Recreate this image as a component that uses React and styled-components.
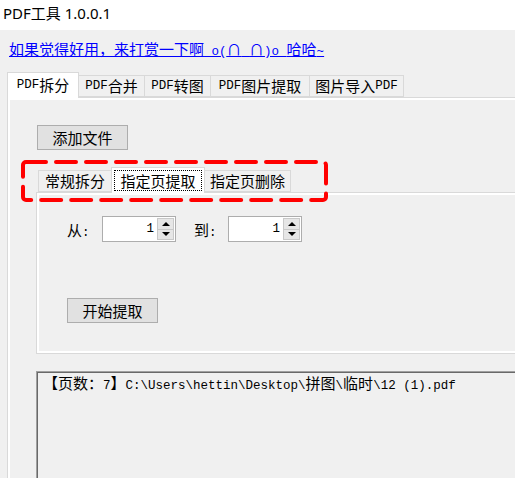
import React from "react";
import styled, { createGlobalStyle } from "styled-components";

const CJK = `"Noto Sans CJK SC", "Noto Sans", sans-serif`;

const Global = createGlobalStyle`
  html, body { margin: 0; padding: 0; background: #f0f0f0; overflow: hidden; }
  body { font-family: ${CJK}; color: #000; }
  * { box-sizing: border-box; }
`;

const Latin = styled.span`
  font-family: "Liberation Mono", monospace;
  font-size: 0.834em;
`;

function Sim({ children }) {
  const parts = String(children).split(/([\x20-\x7e]+)/);
  return parts.map((p, i) =>
    i % 2 === 1 ? <Latin key={i}>{p}</Latin> : p ? <React.Fragment key={i}>{p}</React.Fragment> : null
  );
}

const Window = styled.div`
  width: 580px;
  display: flex;
  flex-direction: column;
`;

const TitleBar = styled.div`
  height: 30px;
  background: #fff;
  padding-left: 3px;
  display: flex;
  align-items: center;
  font: 15px "Noto Sans", ${CJK};
  padding-bottom: 6px;
`;

const Client = styled.div`
  display: flex;
  flex-direction: column;
  padding-top: 10px;
`;

const DonateLink = styled.a`
  margin-left: 9px;
  align-self: flex-start;
  color: #0000ff;
  text-decoration: underline;
  font-size: 15px;
  line-height: 18px;
  font-family: ${CJK};
  cursor: pointer;
`;

const TabControl = styled.div`
  display: flex;
  flex-direction: column;
  margin: ${(p) => p.$margin || "0"};
  position: relative;
`;

const TabStrip = styled.div`
  display: flex;
  align-items: flex-end;
  height: 25px;
  position: relative;
  z-index: 2;
  padding-left: ${(p) => p.$indent || 0}px;
`;

const Tab = styled.div`
  width: ${(p) => p.$w}px;
  height: ${(p) => (p.$active ? 26 : 22)}px;
  margin-bottom: ${(p) => (p.$active ? -1 : 0)}px;
  margin-left: ${(p) => (p.$first ? 0 : -1)}px;
  border: 1px solid #d9d9d9;
  border-bottom: ${(p) => (p.$active ? "none" : "1px solid #d9d9d9")};
  background: ${(p) => (p.$active ? "#fff" : "#f0f0f0")};
  position: relative;
  z-index: ${(p) => (p.$active ? 2 : 1)};
  display: flex;
  align-items: ${(p) => (p.$active ? "flex-start" : "center")};
  padding-top: ${(p) => (p.$active ? 3 : 0)}px;
  justify-content: center;
  font-size: 15px;
  line-height: 18px;
  font-family: ${CJK};
  white-space: nowrap;
`;

const FocusRect = styled.span`
  border: 1px dotted #000;
  padding: 0 4px;
  height: 21px;
  width: calc(100% - 4px);
  display: flex;
  align-items: center;
  justify-content: center;
  margin-top: -1px;
`;

const Panel = styled.div`
  border: 1px solid #d9d9d9;
  background: #fff;
  padding: 2px;
  height: ${(p) => p.$h}px;
  width: ${(p) => p.$w || "auto"};
`;

const Page = styled.div`
  background: #f0f0f0;
  height: 100%;
  display: flex;
  flex-direction: column;
  align-items: flex-start;
  padding-left: ${(p) => p.$pl}px;
  padding-top: ${(p) => p.$pt}px;
`;

const Button = styled.button`
  width: 91px;
  height: 25px;
  border: 1px solid #adadad;
  background: #e1e1e1;
  font: 15px ${CJK};
  color: #000;
  padding: 0;
  display: flex;
  align-items: center;
  justify-content: center;
  margin-top: ${(p) => p.$mt || 0}px;
`;

const Row = styled.div`
  display: flex;
  align-items: center;
  height: 26px;
`;

const Label = styled.span`
  width: ${(p) => p.$w}px;
  font-size: 15px;
  font-family: "Noto Sans CJK SC", sans-serif;
`;

const SpinBox = styled.div`
  width: 74px;
  height: 26px;
  border: 1px solid #adadad;
  background: #fff;
  display: flex;
  align-items: stretch;
  padding: 1px;
  margin-right: ${(p) => p.$mr || 0}px;
`;

const SpinValue = styled.div`
  flex: 1;
  display: flex;
  align-items: center;
  justify-content: flex-end;
  padding-right: 3px;
  font-size: 15px;
`;

const SpinButtons = styled.div`
  width: 17px;
  display: flex;
  flex-direction: column;
`;

const SpinBtn = styled.div`
  flex: 1;
  background: #e6e6e6;
  border: 1px solid #c9c9c9;
  margin-top: ${(p) => (p.$down ? -1 : 0)}px;
  display: flex;
  align-items: center;
  justify-content: center;
  &::after {
    content: "";
    width: 0;
    height: 0;
    border-left: 4px solid transparent;
    border-right: 4px solid transparent;
    ${(p) =>
      p.$down ? "border-top: 4px solid #000;" : "border-bottom: 4px solid #000;"}
  }
`;

const LogBox = styled.div`
  margin-top: 17px;
  margin-left: -1px;
  width: 520px;
  height: 130px;
  border-top: 1px solid #a0a0a0;
  border-left: 1px solid #a0a0a0;
  box-shadow: inset 1px 1px 0 #696969;
  background: #f0f0f0;
  padding: 2px 0 0 6px;
  font-size: 15px;
  line-height: 18px;
  white-space: nowrap;
`;

const Highlight = styled.svg`
  position: absolute;
  left: -15px;
  top: -7px;
  width: 308px;
  height: 43px;
  z-index: 5;
  pointer-events: none;
  overflow: visible;
`;

function Spin({ value, mr }) {
  return (
    <SpinBox $mr={mr}>
      <SpinValue>
        <Sim>{value}</Sim>
      </SpinValue>
      <SpinButtons>
        <SpinBtn />
        <SpinBtn $down />
      </SpinButtons>
    </SpinBox>
  );
}

const outerTabs = [
  { t: "PDF拆分", w: 72 },
  { t: "PDF合并", w: 67 },
  { t: "PDF转图", w: 67 },
  { t: "PDF图片提取", w: 100 },
  { t: "图片导入PDF", w: 95 },
];

const innerTabs = [
  { t: "常规拆分", w: 74 },
  { t: "指定页提取", w: 94, active: true },
  { t: "指定页删除", w: 87 },
];

export default function App() {
  return (
    <Window>
      <Global />
      <TitleBar>PDF工具 1.0.0.1</TitleBar>
      <Client>
        <DonateLink>
          <Sim>如果觉得好用，来打赏一下啊 o(∩_∩)o 哈哈~</Sim>
        </DonateLink>
        <TabControl $margin="11px 0 0 7px">
          <TabStrip>
            {outerTabs.map((tab, i) => (
              <Tab key={tab.t} $w={tab.w} $active={i === 0} $first={i === 0}>
                <Sim>{tab.t}</Sim>
              </Tab>
            ))}
          </TabStrip>
          <Panel $h={420}>
            <Page $pl={27} $pt={25}>
              <Button>添加文件</Button>
              <TabControl $margin="17px 0 0 -1px">
                <Highlight viewBox="0 0 308 43">
                  <rect
                    x="2"
                    y="2"
                    width="303"
                    height="38"
                    rx="3"
                    fill="none"
                    stroke="#ff0000"
                    strokeWidth="4"
                    strokeLinecap="round"
                    strokeDasharray="20 10"
                  />
                </Highlight>
                <TabStrip $indent={2}>
                  {innerTabs.map((tab, i) => (
                    <Tab key={tab.t} $w={tab.w} $active={tab.active} $first={i === 0}>
                      {tab.active ? <FocusRect>{tab.t}</FocusRect> : tab.t}
                    </Tab>
                  ))}
                </TabStrip>
                <Panel $h={162} $w="500px">
                  <Page $pl={28} $pt={21}>
                    <Row>
                      <Label $w={35}>
                        <Sim>从:</Sim>
                      </Label>
                      <Spin value="1" mr={18} />
                      <Label $w={34}>
                        <Sim>到:</Sim>
                      </Label>
                      <Spin value="1" />
                    </Row>
                    <Button $mt={56}>开始提取</Button>
                  </Page>
                </Panel>
              </TabControl>
              <LogBox>
                <Sim>【页数：7】C:\Users\hettin\Desktop\拼图\临时\12 (1).pdf</Sim>
              </LogBox>
            </Page>
          </Panel>
        </TabControl>
      </Client>
    </Window>
  );
}
